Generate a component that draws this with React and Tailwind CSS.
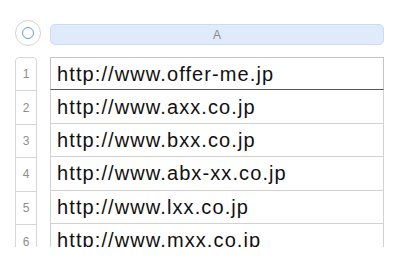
import React from "react";

const urls = [
  "http://www.offer-me.jp",
  "http://www.axx.co.jp",
  "http://www.bxx.co.jp",
  "http://www.abx-xx.co.jp",
  "http://www.lxx.co.jp",
  "http://www.mxx.co.jp",
];

export default function App() {
  return (
    <div
      className="w-[400px] h-[260px] bg-white overflow-hidden pl-[15px] pt-[20px]"
      style={{ fontFamily: '"Liberation Sans", Arial, sans-serif' }}
    >
      {/* Column header */}
      <div className="flex items-start">
        <button className="w-[26px] h-[26px] rounded-full border border-[#d2d2d2] bg-white flex items-center justify-center">
          <span className="w-[12px] h-[12px] rounded-full border-[1.5px] border-[#5b9bf3]" />
        </button>
        <div className="ml-[9px] mt-[4px] w-[334px] h-[21px] rounded-[5px] bg-[#dfeafb] border border-[#cbdbf2] flex items-center justify-center text-[12px] text-[#8a8a8a]">
          A
        </div>
      </div>

      {/* Rows */}
      <div className="mt-[11px] h-[190px] overflow-hidden flex items-start">
        <div className="w-[22px] border border-[#d6d6d6] rounded-t-[4px]">
          {urls.map((_, i) => (
            <div
              key={i}
              className={`h-[33.4px] flex items-center justify-center text-[12px] text-[#8d8d8d] ${
                i < urls.length - 1 ? "border-b border-[#d6d6d6]" : ""
              }`}
            >
              {i + 1}
            </div>
          ))}
        </div>

        <div className="ml-[13px] w-[334px]">
          {urls.map((url, i) => (
            <div
              key={url}
              className={`h-[33.4px] flex items-center pl-[6px] border-x border-b text-[20px] leading-[20px] tracking-[1.1px] text-[#111] ${
                i === 0
                  ? "border-t border-[#c4c4c4] border-b-[#555]"
                  : "border-[#d2d2d2]"
              }`}
            >
              {url}
            </div>
          ))}
        </div>
      </div>
    </div>
  );
}
